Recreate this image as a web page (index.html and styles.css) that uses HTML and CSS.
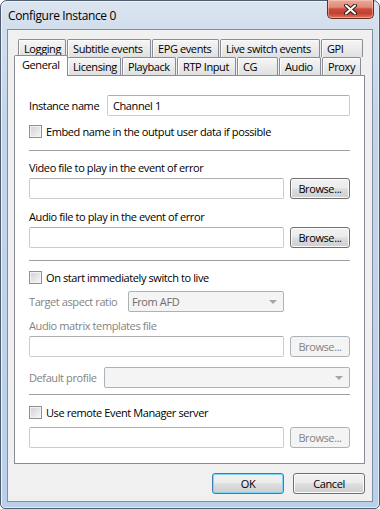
FILE: index.html
```html
<!DOCTYPE html>
<html>
<head>
<meta charset="utf-8">
<link rel="stylesheet" href="styles.css">
</head>
<body>
<div class="window">
  <div class="titlebar">
    <span class="title">Configure Instance 0</span>
    <div class="close">
      <svg width="17" height="11" viewBox="0 0 17 11">
        <path d="M4 1.5 L13 9.5 M13 1.5 L4 9.5" stroke="#3a1a1a" stroke-width="4" stroke-linecap="round" fill="none"/>
        <path d="M4 1.5 L13 9.5 M13 1.5 L4 9.5" stroke="#ffffff" stroke-width="2" stroke-linecap="round" fill="none"/>
      </svg>
    </div>
  </div>
  <div class="client">
    <div class="tabs">
      <div class="tabrow back">
        <div class="tab t-logging">Logging</div>
        <div class="tab t-subtitle">Subtitle events</div>
        <div class="tab t-epg">EPG events</div>
        <div class="tab t-live">Live switch events</div>
        <div class="tab t-gpi">GPI</div>
      </div>
      <div class="tabrow front">
        <div class="tab sel t-general">General</div>
        <div class="tab t-licensing">Licensing</div>
        <div class="tab t-playback">Playback</div>
        <div class="tab t-rtp">RTP Input</div>
        <div class="tab t-cg">CG</div>
        <div class="tab t-audio">Audio</div>
        <div class="tab t-proxy">Proxy</div>
      </div>
      <div class="pane">
        <div class="row r-name">
          <span class="lbl-name">Instance name</span>
          <div class="field grow"><span class="val">Channel 1</span></div>
        </div>
        <div class="check r-embed"><span class="box"></span><span>Embed name in the output user data if possible</span></div>
        <div class="sep s1"></div>
        <div class="label r-video">Video file to play in the event of error</div>
        <div class="row r-input">
          <div class="field grow"></div>
          <div class="btn browse">Browse...</div>
        </div>
        <div class="label r-audio">Audio file to play in the event of error</div>
        <div class="row r-input">
          <div class="field grow"></div>
          <div class="btn browse">Browse...</div>
        </div>
        <div class="sep s2"></div>
        <div class="check r-live"><span class="box"></span><span>On start immediately switch to live</span></div>
        <div class="row r-aspect">
          <span class="lbl-aspect dis">Target aspect ratio</span>
          <div class="select sel-aspect"><span class="val">From AFD</span><span class="arrow"></span></div>
        </div>
        <div class="label dis r-matrix">Audio matrix templates file</div>
        <div class="row r-input">
          <div class="field grow"></div>
          <div class="btn browse disabled">Browse...</div>
        </div>
        <div class="row r-profile">
          <span class="lbl-profile dis">Default profile</span>
          <div class="select grow"><span class="val"></span><span class="arrow"></span></div>
        </div>
        <div class="sep s3"></div>
        <div class="check r-remote"><span class="box"></span><span>Use remote Event Manager server</span></div>
        <div class="row r-rinput">
          <div class="field grow"></div>
          <div class="btn browse disabled">Browse...</div>
        </div>
      </div>
    </div>
    <div class="buttons">
      <div class="btn dlg default">OK</div>
      <div class="btn dlg">Cancel</div>
    </div>
  </div>
</div>
</body>
</html>
```
FILE: styles.css
```css
* { box-sizing: border-box; }
html, body { margin: 0; padding: 0; }
body {
  width: 380px;
  height: 509px;
  overflow: hidden;
  background: #ffffff;
  font-family: "Segoe UI", "Open Sans", "Noto Sans", sans-serif;
  font-size: 11px;
  letter-spacing: -0.4px;
  color: #000;
}
.window {
  width: 380px;
  height: 509px;
  border: 1px solid #4f5d70;
  border-radius: 7px 7px 5px 5px;
  background: linear-gradient(180deg, #dbe5f0 0px, #d2deec 28px, #c3d5ea 120px, #bad0ea 100%);
  box-shadow: inset 1px 1px 0 #eef3f9, inset -1px -1px 0 #e2eaf4;
  padding: 0 6px 6px 6px;
  display: flex;
  flex-direction: column;
}
.titlebar {
  height: 28px;
  display: flex;
  align-items: flex-start;
}
.title {
  margin: 7px 0 0 1px;
  line-height: 16px;
  font-size: 12px;
  letter-spacing: -0.35px;
}
.close {
  margin-left: auto;
  margin-top: -1px;
  margin-right: -1px;
  width: 47px;
  height: 19px;
  border: 1px solid #6b2c22;
  border-top: none;
  border-radius: 0 0 5px 5px;
  background: linear-gradient(180deg, #eaa898 0%, #df8b76 40%, #cc4b3b 50%, #c4402f 75%, #d97a5e 100%);
  box-shadow: inset 0 0 0 1px rgba(255, 220, 210, 0.45);
  display: flex;
  align-items: center;
  justify-content: center;
}
.client {
  height: 473px;
  border: 1px solid #7f8fa3;
  background: #f0f0f0;
  padding: 9px 0 0 6px;
}
.tabs { width: 351px; }
.tabrow {
  display: flex;
  gap: 1px;
  height: 18px;
}
.back { margin-left: 4px; }
.front { margin-left: 2px; }
.tab {
  height: 18px;
  border: 1px solid #898c95;
  border-bottom: none;
  border-radius: 2px 2px 0 0;
  background: linear-gradient(180deg, #f6f6f6 0%, #ebebeb 50%, #e0e0e0 100%);
  box-shadow: inset 1px 1px 0 #fcfcfc;
  text-align: left;
  padding-left: 5px;
  line-height: 18px;
  white-space: nowrap;
  flex: none;
}
.tab.sel {
  background: #ffffff;
  box-shadow: none;
  height: 21px;
  margin: -2px -2px -1px -2px;
  padding-left: 7px;
  position: relative;
  z-index: 1;
  line-height: 18px;
}
.t-logging { width: 48px; }
.t-subtitle { width: 84px; }
.t-epg { width: 67px; }
.t-live { width: 100px; }
.t-gpi { width: 42px; }
.t-general { width: 54px; }
.t-licensing { width: 54px; }
.t-playback { width: 54px; }
.t-rtp { width: 59px; }
.t-cg { width: 41px; }
.t-audio { width: 42px; }
.t-proxy { width: 39px; }

.pane {
  height: 389px;
  border: 1px solid #898c95;
  background: #ffffff;
  padding: 0 14px;
  display: flex;
  flex-direction: column;
}
.row {
  display: flex;
  align-items: center;
  height: 21px;
}
.grow { flex: 1; }
.field {
  height: 21px;
  border: 1px solid #c9ccd2;
  border-top-color: #abadb3;
  border-radius: 2px;
  background: #fff;
  display: flex;
  align-items: center;
}
.val { padding-left: 5px; line-height: 15px; }
.btn {
  height: 21px;
  border: 1px solid #707070;
  border-radius: 3px;
  background: linear-gradient(180deg, #f2f2f2 0%, #ebebeb 48%, #dddddd 52%, #cfcfcf 100%);
  box-shadow: inset 0 0 0 1px #fbfbfb;
  display: flex;
  align-items: center;
  justify-content: center;
  line-height: 15px;
}
.browse { width: 60px; margin-left: 6px; }
.btn.disabled {
  border-color: #adb2b5;
  background: #f4f4f4;
  box-shadow: none;
  color: #838383;
}
.dis { color: #838383; }
.check {
  display: flex;
  align-items: center;
  height: 13px;
  line-height: 15px;
}
.box {
  width: 13px;
  height: 13px;
  border: 1px solid #8e8f8f;
  background: linear-gradient(135deg, #d0d0d0 0%, #e8e8e8 60%, #f7f7f7 100%);
  box-shadow: inset 0 0 0 1px #f4f4f4;
  margin-right: 4px;
  flex: none;
}
.label { line-height: 15px; height: 15px; }
.sep { height: 1px; background: #a0a0a0; flex: none; }

.r-name { margin-top: 19px; }
.lbl-name { width: 78px; flex: none; }
.r-embed { margin-top: 9px; }
.s1 { margin-top: 12px; }
.r-video { margin-top: 9px; }
.r-input { margin-top: 3px; }
.r-audio { margin-top: 10px; }
.s2 { margin-top: 12px; }
.r-live { margin-top: 10px; }
.r-aspect { margin-top: 7px; }
.lbl-aspect { width: 99px; flex: none; }
.select {
  height: 21px;
  border: 1px solid #adb2b5;
  border-radius: 2px;
  background: #f4f4f4;
  display: flex;
  align-items: center;
  color: #6d6d6d;
}
.sel-aspect { width: 156px; }
.select .val { flex: 1; padding-left: 3px; }
.arrow {
  width: 0;
  height: 0;
  border-left: 4px solid transparent;
  border-right: 4px solid transparent;
  border-top: 4px solid #a5a5a5;
  margin-right: 6px;
}
.r-matrix { margin-top: 6px; }
.r-profile { margin-top: 10px; }
.lbl-profile { width: 75px; flex: none; }
.s3 { margin-top: 6px; }
.r-remote { margin-top: 11px; }
.r-rinput { margin-top: 8px; }

.buttons {
  width: 351px;
  display: flex;
  justify-content: flex-end;
  gap: 9px;
  margin-top: 9px;
}
.dlg { width: 72px; }
.default {
  border-color: #3c7fb1;
  box-shadow: inset 0 0 0 1px #7fd3f3;
}
```
